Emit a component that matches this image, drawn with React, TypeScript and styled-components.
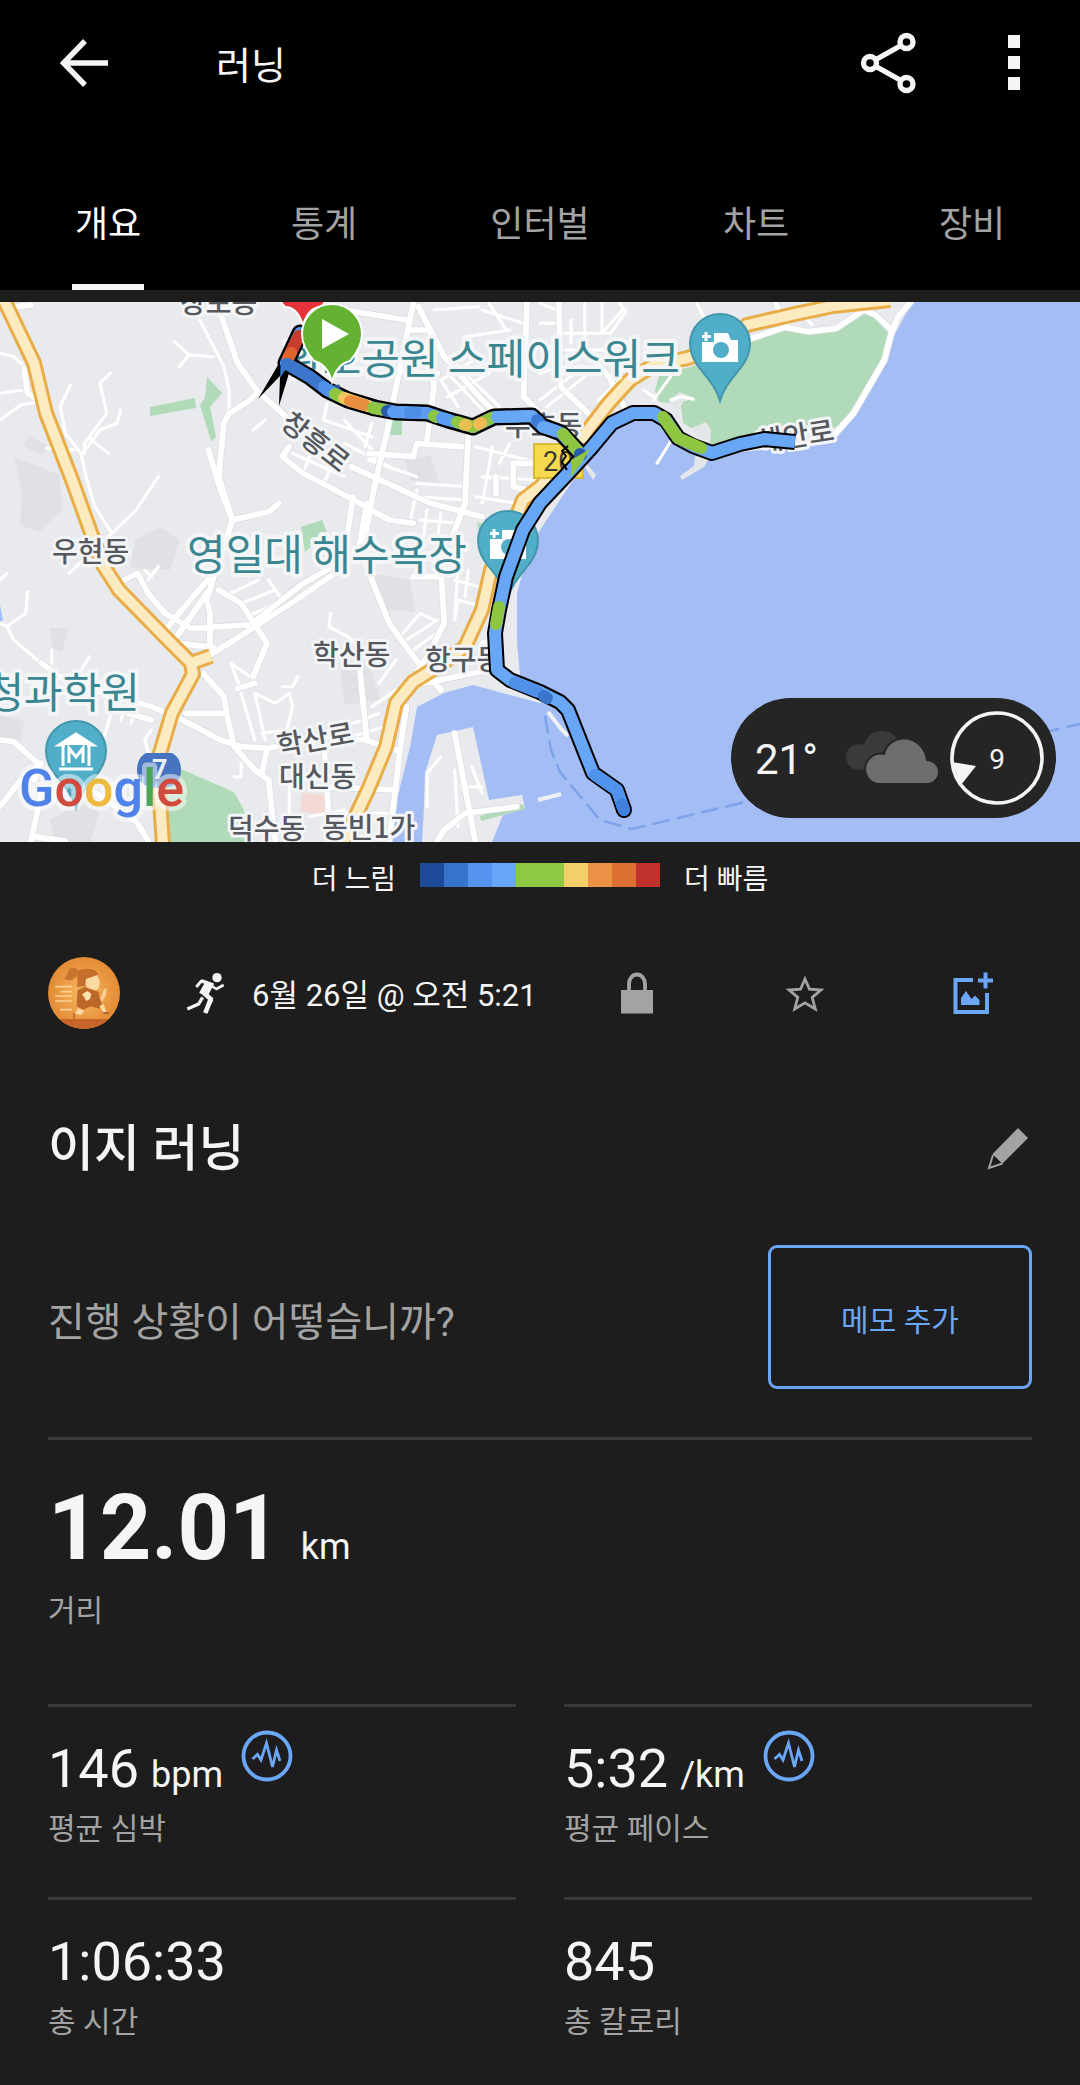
import React from "react";
import styled, { createGlobalStyle } from "styled-components";

const color = {
  page: "#1d1d1d",
  bar: "#000000",
  text: "#f5f5f5",
  muted: "#a3a3a3",
  line: "#3a3a3a",
  accent: "#6ba6f7",
};

const GlobalStyle = createGlobalStyle`
  * { box-sizing: border-box; }
  body {
    margin: 0;
    background: ${color.page};
    color: ${color.text};
    font-family: Roboto, "Noto Sans CJK KR", sans-serif;
    -webkit-font-smoothing: antialiased;
  }
  button {
    padding: 0;
    border: 0;
    background: none;
    color: inherit;
    font: inherit;
    cursor: pointer;
  }
  h1, h2, p, dl, dt, dd { margin: 0; }
`;

const Page = styled.div`
  width: 100%;
`;

/* ---------- header ---------- */

const Header = styled.header`
  background: ${color.bar};
  border-bottom: 12px solid ${color.page};
`;

const AppBar = styled.div`
  display: flex;
  align-items: center;
  height: 126px;
  padding-left: 48px;
`;

const AppTitle = styled.h1`
  flex: 1;
  padding: 6px 0 0 96px;
  font-size: 38px;
  font-weight: 400;
  line-height: 48px;
`;

const IconButton = styled.button<{ $width: number }>`
  display: flex;
  align-items: center;
  justify-content: center;
  flex: none;
  width: ${(p) => p.$width}px;
  height: 72px;
`;

const Tabs = styled.nav`
  display: grid;
  grid-template-columns: repeat(5, 1fr);
  height: 164px;
`;

const Tab = styled.button<{ $active?: boolean }>`
  display: flex;
  flex-direction: column;
  align-items: center;
  justify-content: space-between;
  padding-top: 75px;
  color: ${(p) => (p.$active ? "#ffffff" : color.muted)};
  font-size: 36px;
  font-weight: 400;
  line-height: 48px;

  &::after {
    content: "";
    width: 72px;
    height: 6px;
    background: ${(p) => (p.$active ? color.text : "transparent")};
  }
`;

/* ---------- map ---------- */

const MapFrame = styled.section`
  position: relative;
`;

const MapSvg = styled.svg`
  display: block;
  width: 100%;
  height: auto;
  background: #e8eaed;
  overflow: hidden;
`;

const PlaceText = styled.text<{ $large?: boolean }>`
  font-family: "Noto Sans CJK KR", sans-serif;
  font-size: ${(p) => (p.$large ? 42 : 28)}px;
  font-weight: ${(p) => (p.$large ? 400 : 500)};
  fill: ${(p) => (p.$large ? "#3b8791" : "#55585d")};
  stroke: #f3f5f7;
  stroke-width: ${(p) => (p.$large ? 8 : 6)}px;
  stroke-linejoin: round;
  paint-order: stroke;
`;

const ShieldText = styled.text<{ $light?: boolean }>`
  font-family: Roboto, sans-serif;
  font-size: 27px;
  font-weight: ${(p) => (p.$light ? 700 : 400)};
  fill: ${(p) => (p.$light ? "#e9effa" : "#3c3c32")};
`;

const LogoText = styled.text`
  font-family: Roboto, sans-serif;
  font-size: 52px;
  font-weight: 500;
  stroke: rgba(255, 255, 255, 0.5);
  stroke-width: 9px;
  stroke-linejoin: round;
  paint-order: stroke;
`;

const WeatherPill = styled.div`
  position: absolute;
  right: 24px;
  bottom: 24px;
  display: flex;
  align-items: center;
  justify-content: space-between;
  width: 325px;
  height: 120px;
  padding: 0 11px 0 24px;
  border-radius: 60px;
  background: #252525;
`;

const Temperature = styled.span`
  padding-top: 4px;
  font-size: 42px;
  line-height: 48px;
`;

const Forecast = styled.div`
  display: flex;
  align-items: center;
  gap: 10px;
`;

const Wind = styled.div`
  display: grid;
  place-items: center;

  > * {
    grid-area: 1 / 1;
  }
`;

const WindSpeed = styled.span`
  padding-top: 4px;
  font-size: 28px;
  line-height: 36px;
`;

const Legend = styled.div`
  display: flex;
  justify-content: center;
  gap: 24px;
  padding-top: 20px;
  font-size: 28px;
  line-height: 36px;
`;

const Scale = styled.div`
  display: flex;
  padding: 1px 0 11px;
`;

const Swatch = styled.span<{ $color: string }>`
  width: 24px;
  height: 24px;
  background: ${(p) => p.$color};
`;

/* ---------- activity ---------- */

const MetaRow = styled.div`
  display: flex;
  align-items: center;
  margin-top: 59px;
  padding: 0 23px 0 48px;
`;

const ActivityIcon = styled.div`
  display: flex;
  justify-content: center;
  width: 132px;
  padding-left: 39px;
`;

const DateText = styled.p`
  flex: 1;
  padding-top: 6px;
  font-size: 31px;
  line-height: 48px;
  white-space: nowrap;
`;

const Content = styled.main`
  padding: 0 48px;
`;

const TitleRow = styled.div`
  display: flex;
  align-items: center;
  justify-content: space-between;
  margin-top: 84px;
`;

const ActivityTitle = styled.h2`
  font-size: 50px;
  font-weight: 500;
  line-height: 72px;
`;

const NoteRow = styled.div`
  display: flex;
  align-items: center;
  justify-content: space-between;
  margin-top: 60px;
  padding-bottom: 48px;
  border-bottom: 3px solid ${color.line};
`;

const NotePrompt = styled.p`
  padding-top: 12px;
  color: ${color.muted};
  font-size: 40px;
  line-height: 48px;
`;

const NoteButton = styled.button`
  width: 264px;
  height: 144px;
  padding-top: 8px;
  border: 3px solid ${color.accent};
  border-radius: 9px;
  color: ${color.accent};
  font-size: 30px;
  line-height: 36px;
`;

const Stats = styled.dl`
  display: grid;
  grid-template-columns: 1fr 1fr;
  column-gap: 48px;
`;

const Stat = styled.div<{ $wide?: boolean }>`
  display: flex;
  flex-direction: column-reverse;
  justify-content: flex-end;
  gap: ${(p) => (p.$wide ? 16 : 10)}px;
  grid-column: ${(p) => (p.$wide ? "1 / -1" : "auto")};
  height: ${(p) => (p.$wide ? 264 : 193)}px;
  padding-top: ${(p) => (p.$wide ? 41 : 30)}px;
  border-top: ${(p) => (p.$wide ? "0" : `3px solid ${color.line}`)};
`;

const StatLabel = styled.dt`
  color: ${color.muted};
  font-size: 30px;
  line-height: 36px;
`;

const StatValue = styled.dd<{ $wide?: boolean }>`
  display: flex;
  align-items: baseline;
  gap: ${(p) => (p.$wide ? 20 : 12)}px;
  height: ${(p) => (p.$wide ? 96 : 64)}px;
  font-size: ${(p) => (p.$wide ? 90 : 54)}px;
  font-weight: ${(p) => (p.$wide ? 700 : 400)};
  line-height: ${(p) => (p.$wide ? 96 : 64)}px;
`;

const Unit = styled.span`
  font-size: 36px;
  font-weight: 400;
  line-height: 48px;
`;

const TrendButton = styled.button`
  align-self: flex-start;
  width: 52px;
  height: 54px;
  margin: -8px 0 0 6px;

  svg {
    display: block;
  }
`;

/* ---------- icons ---------- */

const BackIcon = () => (
  <svg width="48" height="48" viewBox="0 0 48 48" fill="none" stroke={color.text} strokeWidth="5.4">
    <path d="M25 2 3.500 24 25 46M4 24H48" />
  </svg>
);

const ShareIcon = () => (
  <svg width="56" height="62" viewBox="0 0 56 62" fill="none" stroke={color.text} strokeWidth="5.400">
    <circle cx="46.500" cy="10" r="6.500" />
    <circle cx="10" cy="31" r="6.500" />
    <circle cx="46.500" cy="52" r="6.500" />
    <path d="M16 27.500 41 13.500M16 34.500 41 48.500" />
  </svg>
);

const MoreIcon = () => (
  <svg width="12" height="56" viewBox="0 0 12 56" fill={color.text}>
    <path d="M0 0H12V13H0ZM0 21H12V34H0ZM0 42H12V55H0Z" />
  </svg>
);

const LockIcon = () => (
  <svg width="32" height="42" viewBox="0 0 32 42" fill={color.muted}>
    <rect y="18" width="32" height="23.500" />
    <path d="M8 20V12a8 9.500 0 0 1 16 0v8" fill="none" stroke={color.muted} strokeWidth="3.800" />
  </svg>
);

const StarIcon = () => (
  <svg width="40" height="40" viewBox="0 0 40 40" fill="none" stroke={color.muted} strokeWidth="2.800">
    <path d="M20 6 24.500 16.200 36 17 27.200 24.300 30.300 36 20 29.800 9.700 36 12.800 24.300 4 17 15.500 16.200Z" />
  </svg>
);

const AddPhotoIcon = () => (
  <svg width="42" height="42" viewBox="0 0 42 42" fill={color.accent}>
    <path d="M21 8H3.500V40H35V21" fill="none" stroke={color.accent} strokeWidth="4" />
    <path d="M26 6.500H31.500V.500H35.500V6.500H41V10.500H35.500V16.500H31.500V10.500H26Z" />
    <path d="M9 33V26L14 19 19.500 27 23 23.500 27.500 28V33Z" />
  </svg>
);

const PencilIcon = () => (
  <svg width="42" height="42" viewBox="0 0 42 42" fill={color.muted}>
    <path d="M31 0 41 10 15.500 35.500 5.500 26Z" />
    <path d="M6 27 2 40 15.500 35.500" fill="none" stroke={color.muted} strokeWidth="2" />
    <path d="M5.500 26 9.500 26.500 14.500 33 15.500 35.500" fill={color.muted} />
  </svg>
);

const TrendIcon = () => (
  <svg width="52" height="54" viewBox="0 0 52 54" fill="none" stroke={color.accent}>
    <circle cx="26" cy="27" r="23.500" strokeWidth="3.800" />
    <path d="M11.500 30 16.500 25.500 20 31 25.500 14 31.500 38 35.500 21 39 32" strokeWidth="2.800" />
  </svg>
);

const RunnerIcon = () => (
  <svg width="40" height="42" viewBox="436 66 120 126" fill="none" stroke={color.text} strokeLinejoin="round">
    <circle cx="529" cy="83" r="14" fill={color.text} stroke="none" />
    <path d="M484 90 518 102 500 136 478 128 493 101Z" fill={color.text} strokeWidth="4" />
    <path d="M467 111 481 94 500 98" strokeWidth="9" />
    <path d="M506 103 527 117 549 105" strokeWidth="8" />
    <path d="M489 128 510 147 494 189" strokeWidth="14" strokeLinejoin="miter" />
    <path d="M486 142 474 162 440 177" strokeWidth="10" />
    <path d="M506 150 493 191 500 186 518 150Z" fill={color.text} stroke="none" />
  </svg>
);

const Avatar = () => (
  <svg width="72" height="72" viewBox="24 22 216 216" role="img" aria-label="프로필">
    <defs>
      <radialGradient id="glow">
        <stop offset="0.3" stopColor="#f2ac55" />
        <stop offset="1" stopColor="#e38a34" />
      </radialGradient>
      <clipPath id="disc">
        <circle cx="132" cy="130" r="108" />
      </clipPath>
    </defs>
    <g clipPath="url(#disc)">
      <rect x="24" y="22" width="216" height="216" fill="url(#glow)" />
      <rect x="24" y="208" width="216" height="30" fill="#c8652b" />
      <g stroke="#f9cf94" strokeWidth="5">
        <path d="M46 111H96M62 126H96M46 139H96M46 154H96M60 180H96" />
      </g>
      <path d="M112 66C120 55 160 54 172 68L176 84 148 90 140 108 112 112Z" fill="#c66f2c" />
      <path d="M66 84C76 88 78 80 84 66 90 50 112 50 114 66 112 84 98 92 84 92Z" fill="#c9742f" />
      <path d="M138 88 172 76 180 96 176 116 164 124 146 118 136 104Z" fill="#fbd9a0" />
      <path d="M110 122 130 118 138 128 184 142 192 118 200 116 198 136 186 156 112 156Z" fill="#f9d195" />
      <path d="M112 122 134 112 176 126 180 146 186 164 180 178 152 170 130 180 110 170Z" fill="#bd682b" />
      <path d="M126 134 142 124 154 132 150 148 138 154 134 144Z" fill="#fce0af" />
      <path d="M114 176 132 182 124 196 104 192Z" fill="#fbd9a0" />
      <path d="M178 170 190 162 200 188 190 188Z" fill="#fbd9a0" />
      <path d="M102 190V208M190 190H208" stroke="#a95a28" strokeWidth="4" />
    </g>
  </svg>
);

const CloudIcon = () => (
  <svg width="94" height="54" viewBox="0 0 94 54">
    <path d="M13 39A13 13 0 1 1 19 14C24-3 44-4 52 8L34 24 20 38Z" fill="#3b3b3b" />
    <path
      d="M32 53A15 15 0 1 1 39 23C44 1 78 2 82 29A12 12 0 1 1 82 53Z"
      fill="#6e6e6e"
      stroke="#252525"
      strokeWidth="2"
    />
  </svg>
);

const WindDial = () => (
  <svg width="96" height="96" viewBox="0 0 96 96">
    <circle cx="48" cy="48" r="45" fill="none" stroke={color.text} strokeWidth="3.600" />
    <path d="M3 52 27 56 12 75Z" fill={color.text} />
  </svg>
);

/* ---------- map drawing ---------- */

const tile = (x: number, y: number) => `translate(${x} ${y}) scale(0.3444 0.3333)`;

const highways = [
  "M3 298 34 363 46 413 72 480 90 530 103 565 119 590 165 637 191 663 193 674 172 713 158 760 160 800 163 845",
  "M188 664 211 656",
  "M890 300 833 306 795 314 747 325 722 345 688 358 654 365 630 380 609 403 588 430 574 452 540 487 523 500 510 533 491 570 482 610 465 647 440 665 413 682 396 703 386 747 368 790 342 845",
];

const tiles = [
  {
    x: 0,
    y: 290,
    major:
      "M630 40 660 130 690 220 745 300 830 380M745 310 720 335 665 370 650 400 635 560 675 690M605 480 640 600 675 690 780 665 810 640M675 690 640 800 620 870M1200 40 1160 240 1125 420 1085 600 1050 800M1215 50 1290 200 1400 330 1440 370M1360 430 1350 640 1310 750M820 500 880 550 1010 620 1130 690 1200 700M1020 530 1250 640 1400 680M1250 120 1260 290 1240 450M1070 490 1200 500 1210 460 1340 470M1000 60 1180 90M1530 40 1520 320 1568 370M70 235 80 310 110 330M1440 560V610M1560 520H1490V590L1530 600M1025 620 1005 760M1065 640 1045 760M0 55 90 45M1190 120H1250M1140 240 1270 250M820 500 840 470",
    minor:
      "M580 90 650 230 665 300V370M505 155 550 195 620 200M550 195 520 230M0 190 40 200 70 230M0 310 70 300M0 390 60 345 110 335M320 250 290 280 310 370 245 460V490M350 360 340 400 290 420 240 490M260 445 315 490M205 285 175 350 190 430 235 490 250 560 275 650 325 730M460 560 395 660 325 730 200 850M135 475 215 480M735 420 770 390M950 340 940 390 1080 440M1280 270 1330 350M1300 250 1420 380M1310 210 1450 350M1280 270 1390 200M1300 320 1420 250M1350 140 1480 120M1350 140 1330 210M1380 470 1568 520M1400 560 1568 570M1380 620 1500 640M1430 470 1400 640M1480 460 1450 520M850 490 1000 560M880 550 910 470M940 580 980 490M1210 600 1190 700M1240 660 1230 740M1280 670 1270 750M1210 580 1360 590M1000 390 1080 480M1080 400 1060 470M1260 60 1390 50M1420 40 1470 120M1200 620 1360 630M1220 690 1330 700M1400 60 1520 100M1070 510 1210 560M1000 460 1150 540",
  },
  {
    x: 540,
    y: 290,
    major:
      "M55 40 60 290 160 390M130 180 200 260 245 350M600 150 710 112 780 125 860 115 940 60 975 75 1020 120M715 110 685 40M1080 30 1040 80 1020 130 1000 210 910 370 850 440",
    minor:
      "M130 40V160M180 40V130L240 60M0 100H60M90 90V160M230 40 250 65 205 130M60 180H200M0 330 100 250M20 350 130 260M330 330 400 230M380 330 410 320 445 328M340 520 400 420M300 300 330 320M455 40 475 80M0 40 50 60M70 130H200M0 250 60 230M170 330 230 270M770 80 790 105",
  },
  {
    x: 0,
    y: 560,
    major:
      "M360 60 400 40 430 100 480 160 555 205 720 195M480 210 560 110 630 30M510 235 600 100M610 270V160L600 120 630 20M610 285 680 240 860 120 1000 20M520 250 620 262M635 90 700 130 775 250 735 350M690 385 740 370M590 340 650 410 660 470 680 560 740 630 780 660 790 760 800 843M120 310 200 370 440 440 530 480 640 540 700 560 780 565 940 530 1060 540 1150 570M540 460H650M1060 10 1130 190 1230 330 1280 390M1280 20 1290 190 1240 290 1160 420M1045 330 1065 540M940 550 960 843M775 570 760 640M1230 370 1420 330M1180 440 1160 580 1130 843M1320 520 1380 843M1500 740 1350 760 1290 810 1270 843M940 680 1150 690M0 540 40 545 110 610 100 660M0 740 60 660 120 610M120 700 90 843M100 830 190 843M280 700 400 790 430 843M370 460 440 480M745 180 880 70 1000 0M1200 50H1280M1400 250 1440 240",
    minor:
      "M80 95 75 160 20 200 0 190M20 200 40 240 120 310M150 310V270M230 340 260 290M300 540 320 470M440 610 420 540 440 510M680 650H700V610M700 400 740 540M740 400 770 540M670 310 740 360M670 310 700 390M740 400 800 430 840 400 850 440 830 520M820 380H850L865 350M960 160 955 200 1010 230 1040 260M1170 220 1220 160 1260 180M1180 240 1270 180M1200 270 1280 210M1330 120 1400 140M1320 180 1330 120M1320 60 1390 80M1330 20 1320 180M1360 30 1350 110M1100 370 1150 300M1080 440 1150 390M1000 500 1100 460M1020 530 1120 500M840 680V780M900 770 1000 750M1240 740V640L1280 590M1320 630 1330 800M1370 620 1400 700M1340 680H1400M670 100 750 60M700 130 800 90M720 170 820 120M780 60 820 120M960 760 1140 760M430 60 460 20M440 50 420 30M0 60 20 40M370 430 350 480M400 440 380 490M760 520 830 510M1000 770 1080 780",
  },
];

const baseRoute =
  "M795 442 764 439 740 444 712 453 693 446 678 438 666 420 654 413 633 413 612 423 592 447 571 470 540 503 523 530 506 577 499 610 495 633 497 670 510 680 540 692 560 702 568 710 593 773 617 790 624 810";
const inlandRoute =
  "M300 333 286 363 310 377 327 390 348 400 375 408 396 412 427 413 448 420 473 427 494 417 532 416 542 426 561 433 580 453";

const paces: [string, string][] = [
  ["#68a6f6", baseRoute],
  ["#5898ee", inlandRoute],
  ["#c93b2b", "M299 336 291 352"],
  ["#e0632b", "M291 353 288 358"],
  ["#3b76cc", "M287 364 310 377 322 386"],
  ["#4f90e8", "M324 387 333 393"],
  ["#8fc641", "M335 394 343 398"],
  ["#f1c65c", "M344 398 368 406"],
  ["#e98e3e", "M350 401 364 405"],
  ["#8fc641", "M373 408 385 410"],
  ["#2858a8", "M387 411 388 411"],
  ["#5b9df2", "M393 412 426 413"],
  ["#4c8de6", "M410 413 416 413"],
  ["#8fc641", "M434 416 436 417"],
  ["#5b9df2", "M442 418 449 420"],
  ["#8fc641", "M457 422 473 427 491 418"],
  ["#e9c150", "M465 425 466 425"],
  ["#f1b956", "M479 424 481 423"],
  ["#68a6f6", "M497 417 532 416"],
  ["#3b7bd6", "M537 420 540 423"],
  ["#68a6f6", "M543 427 556 431"],
  ["#8fc641", "M563 434 577 450"],
  ["#2858a8", "M580 454 581 455"],
  ["#8fc641", "M663 417 678 438 701 448"],
  ["#8fc641", "M499 607 496 624"],
  ["#4f90e8", "M515 683 538 692"],
  ["#3b76cc", "M544 696 547 698"],
  ["#4f93ec", "M595 775 617 790 624 810"],
  ["#3f7fdd", "M622 804 624 810"],
];

type PinProps = {
  x: number;
  y: number;
  tip?: number;
  fill: string;
  stroke: string;
  children?: React.ReactNode;
};

const Pin = ({ x, y, tip = 57, fill, stroke, children }: PinProps) => (
  <g transform={`translate(${x} ${y})`}>
    <path
      d={`M0 ${tip}C-3 ${tip - 11}-9 ${tip - 19}-18 27-26 18-30 10-30 0A30 30 0 0 1 30 0C30 10 26 18 18 27 9 ${tip - 19} 3 ${tip - 11} 0 ${tip}Z`}
      fill={fill}
      stroke={stroke}
      strokeWidth="2"
    />
    {children}
  </g>
);

const CameraGlyph = () => (
  <g>
    <path d="M-18-2H-6V-11H8L11-4H18V18H-18Z" fill="#fff" />
    <circle cx="1" cy="6" r="8" fill="#51aec9" />
    <path d="M-14-12V-3M-18-7.500H-9" stroke="#fff" strokeWidth="3" />
  </g>
);

const RouteMap = () => (
  <MapSvg viewBox="0 302 1080 540" role="img" aria-label="러닝 경로 지도">
    <g fill="#dfe1e5">
      <path d="M14 457 60 475 62 510 40 532 20 525 22 490Z" />
      <path d="M135 540 160 527 180 540 170 570 130 568ZM22 445 30 436 50 448 40 455Z" />
      <path d="M370 573 410 580 415 612 385 610ZM340 670 370 665 380 700 345 705Z" />
      <path d="M0 715 25 722 20 740 0 740ZM405 460 430 455 440 485 410 480ZM50 628H68L62 652 52 648Z" />
      <path d="M50 820 85 800 100 812 90 842 55 842Z" />
    </g>
    <g fill="#b1dab9">
      <path d="M150 407 195 398 196 408 150 416ZM207 377 222 393 210 407 216 437 211 441 200 405 205 398Z" />
      <path d="M389 420H402V435H389ZM301 527 322 520 327 532 305 552ZM477 522 490 526 480 540Z" />
      <path d="M169 765 183 770 234 792 244 810 246 842H168Z" />
    </g>
    <path d="M302 792 325 795V815L300 811Z" fill="#f5d9d6" />
    <path
      d="M915 302 905 315 893 338 886 362 870 392 850 416 836 433 800 446 712 455 700 449 690 440 678 440 650 415 623 413 595 447 540 530 527 557 517 593 517 643 520 675 545 694 540 703 473 685 444 693 417 707 410 747 396 803 392 842 422 842 424 807 425 773 437 735 473 727 489 800 522 795 525 808 503 815 492 842 1080 842 1080 302Z"
      fill="#a4bef5"
    />
    <path d="M0 605 3 620 0 622Z" fill="#a4bef5" />
    <path
      d="M660 373 655 390 659 402 669 403 676 395 681 407 683 423 691 428 705 423 709 443 714 445 760 432 795 435 836 427 852 410 881 362 888 333 870 313 860 310 836 327 808 332 784 328 753 340 691 367Z"
      fill="#b1dab9"
    />
    <path d="M669 400 680 392 694 398 683 402 678 412 684 428ZM692 428 706 422 711 430 710 444 698 437Z" fill="#e4e7ea" />
    <path d="M695 456 709 458 704 467 682 480 680 476 694 466ZM583 464 593 480 596 475 588 465Z" fill="#e4e7ea" />
    <path d="M480 816 522 804 525 809 481 821Z" fill="#b1dab9" />
    <path d="M548 712 562 730 568 736M538 800 561 794" stroke="#eef0f3" strokeWidth="4" fill="none" />
    <path
      d="M545 716 551 750 560 772 600 820 632 829 745 802 1080 724"
      fill="none"
      stroke="#7da2ea"
      strokeWidth="2.500"
      strokeDasharray="18 7"
    />

    {tiles.map((t) => (
      <g key={`${t.x}-${t.y}`} transform={tile(t.x, t.y)} fill="none" stroke="#fff" strokeLinejoin="round" strokeLinecap="round">
        <path d={t.minor} strokeWidth="9" />
        <path d={t.major} stroke="#d9dce1" strokeWidth="21" />
        <path d={t.major} strokeWidth="17" />
      </g>
    ))}

    <g fill="none" strokeLinejoin="round">
      {highways.map((d) => (
        <path key={d} d={d} stroke="#e8ad47" strokeWidth="16" />
      ))}
      {highways.map((d) => (
        <path key={d} d={d} stroke="#fcebc1" strokeWidth="10" />
      ))}
    </g>

    <PlaceText x="180" y="313">창포동</PlaceText>
    <PlaceText x="505" y="436">두호동</PlaceText>
    <PlaceText x="52" y="562">우현동</PlaceText>
    <PlaceText x="313" y="665">학산동</PlaceText>
    <PlaceText x="425" y="670">항구동</PlaceText>
    <PlaceText x="279" y="756" transform="rotate(-10 279 756)">학산로</PlaceText>
    <PlaceText x="279" y="787">대신동</PlaceText>
    <PlaceText x="228" y="839">덕수동</PlaceText>
    <PlaceText x="322" y="838">동빈1가</PlaceText>
    <PlaceText x="279" y="426" transform="rotate(38 279 426)">창흥로</PlaceText>
    <PlaceText x="759" y="452" transform="rotate(-9 759 452)">해안로</PlaceText>
    <PlaceText $large x="284" y="374">환호공원 스페이스워크</PlaceText>
    <PlaceText $large x="187" y="570">영일대 해수욕장</PlaceText>
    <PlaceText $large x="140" y="708" textAnchor="end">청과학원</PlaceText>

    <rect x="534" y="444" width="49" height="34" fill="#f5d94f" stroke="#d9b93c" strokeWidth="2" />
    <ShieldText x="543" y="471">20</ShieldText>
    <path d="M146 753H172Q181 758 181 770 181 788 159 788 137 788 137 770 137 758 146 753Z" fill="#4774c0" />
    <ShieldText $light x="152" y="779">7</ShieldText>

    <Pin x={720} y={344} fill="#51aec9" stroke="#4496ac">
      <CameraGlyph />
    </Pin>
    <Pin x={508} y={541} fill="#51aec9" stroke="#4496ac">
      <CameraGlyph />
    </Pin>
    <Pin x={76} y={751} fill="#51aec9" stroke="#4496ac">
      <path d="M-17-6 0-17 17-6ZM-13-6V15M13-6V15M-17 18H17" fill="#fff" stroke="#fff" strokeWidth="3" />
      <rect x="-11" y="-6" width="22" height="20" fill="#51aec9" />
      <path d="M-7 12V-3L0 6 7-3V12" fill="none" stroke="#fff" strokeWidth="3" />
    </Pin>

    <Pin x={303} y={280} tip={46} fill="#e8323a" stroke="#fff" />
    <g fill="none" strokeLinejoin="round">
      <path d={inlandRoute} stroke="#000" strokeWidth="17" strokeLinecap="round" />
      <path d={baseRoute} stroke="#000" strokeWidth="16" />
      <circle cx="624" cy="810" r="8" fill="#000" />
      <path d="M337 392 336 385" stroke="#2b5390" strokeWidth="7" />
      <path d="M281 360 258 399 280 376 279 406 290 370Z" fill="#000" />
      {paces.map(([stroke, d], i) => (
        <path key={i} d={d} stroke={stroke} strokeWidth="12" strokeLinecap={d === baseRoute ? "butt" : "round"} />
      ))}
      <path d="M571 477V460L590 449 583 461Z" fill="#8fc641" />
      <path d="M568 446 562 451 566 456 562 462 567 470" stroke="#000" strokeWidth="2" />
      <path d="M281 358 280 378 288 366" fill="#3b76cc" />
    </g>
    <Pin x={332} y={334} tip={48} fill="#63b233" stroke="#fff">
      <path d="M-10-15V15L17 0Z" fill="#fff" />
    </Pin>

    <LogoText x="19" y="806">
      <tspan fill="#4f83ea">G</tspan>
      <tspan fill="#d04b3e">o</tspan>
      <tspan fill="#edba3f">o</tspan>
      <tspan fill="#4f83ea">g</tspan>
      <tspan fill="#4ba557">l</tspan>
      <tspan fill="#d04b3e">e</tspan>
    </LogoText>
  </MapSvg>
);

const scaleColors = [
  "#1e4a9a",
  "#3772cb",
  "#5594ee",
  "#68a6fa",
  "#8fc843",
  "#8fc843",
  "#f4cf68",
  "#ea9145",
  "#dc6f31",
  "#c0322b",
];

const tabs = ["개요", "통계", "인터벌", "차트", "장비"];

const stats = [
  { label: "거리", value: "12.01", unit: "km", wide: true },
  { label: "평균 심박", value: "146", unit: "bpm", trend: true },
  { label: "평균 페이스", value: "5:32", unit: "/km", trend: true },
  { label: "총 시간", value: "1:06:33" },
  { label: "총 칼로리", value: "845" },
];

export default function App() {
  return (
    <Page>
      <GlobalStyle />
      <Header>
        <AppBar>
          <IconButton $width={72} aria-label="뒤로">
            <BackIcon />
          </IconButton>
          <AppTitle>러닝</AppTitle>
          <IconButton $width={120} aria-label="공유">
            <ShareIcon />
          </IconButton>
          <IconButton $width={132} aria-label="더보기">
            <MoreIcon />
          </IconButton>
        </AppBar>
        <Tabs>
          {tabs.map((name, i) => (
            <Tab key={name} $active={i === 0} aria-current={i === 0 ? "page" : undefined}>
              {name}
            </Tab>
          ))}
        </Tabs>
      </Header>

      <MapFrame>
        <RouteMap />
        <WeatherPill>
          <Temperature>21°</Temperature>
          <Forecast>
            <CloudIcon />
            <Wind>
              <WindDial />
              <WindSpeed>9</WindSpeed>
            </Wind>
          </Forecast>
        </WeatherPill>
      </MapFrame>

      <Legend>
        <span>더 느림</span>
        <Scale>
          {scaleColors.map((c, i) => (
            <Swatch key={i} $color={c} />
          ))}
        </Scale>
        <span>더 빠름</span>
      </Legend>

      <MetaRow>
        <Avatar />
        <ActivityIcon>
          <RunnerIcon />
        </ActivityIcon>
        <DateText>6월 26일 @ 오전 5:21</DateText>
        <IconButton $width={168} aria-label="공개 설정">
          <LockIcon />
        </IconButton>
        <IconButton $width={168} aria-label="즐겨찾기">
          <StarIcon />
        </IconButton>
        <IconButton $width={168} aria-label="사진 추가">
          <AddPhotoIcon />
        </IconButton>
      </MetaRow>

      <Content>
        <TitleRow>
          <ActivityTitle>이지 러닝</ActivityTitle>
          <IconButton $width={48} aria-label="제목 수정">
            <PencilIcon />
          </IconButton>
        </TitleRow>
        <NoteRow>
          <NotePrompt>진행 상황이 어떻습니까?</NotePrompt>
          <NoteButton>메모 추가</NoteButton>
        </NoteRow>
        <Stats>
          {stats.map((s) => (
            <Stat key={s.label} $wide={s.wide}>
              <StatLabel>{s.label}</StatLabel>
              <StatValue $wide={s.wide}>
                {s.value}
                {s.unit && <Unit>{s.unit}</Unit>}
                {s.trend && (
                  <TrendButton aria-label={`${s.label} 차트`}>
                    <TrendIcon />
                  </TrendButton>
                )}
              </StatValue>
            </Stat>
          ))}
        </Stats>
      </Content>
    </Page>
  );
}
